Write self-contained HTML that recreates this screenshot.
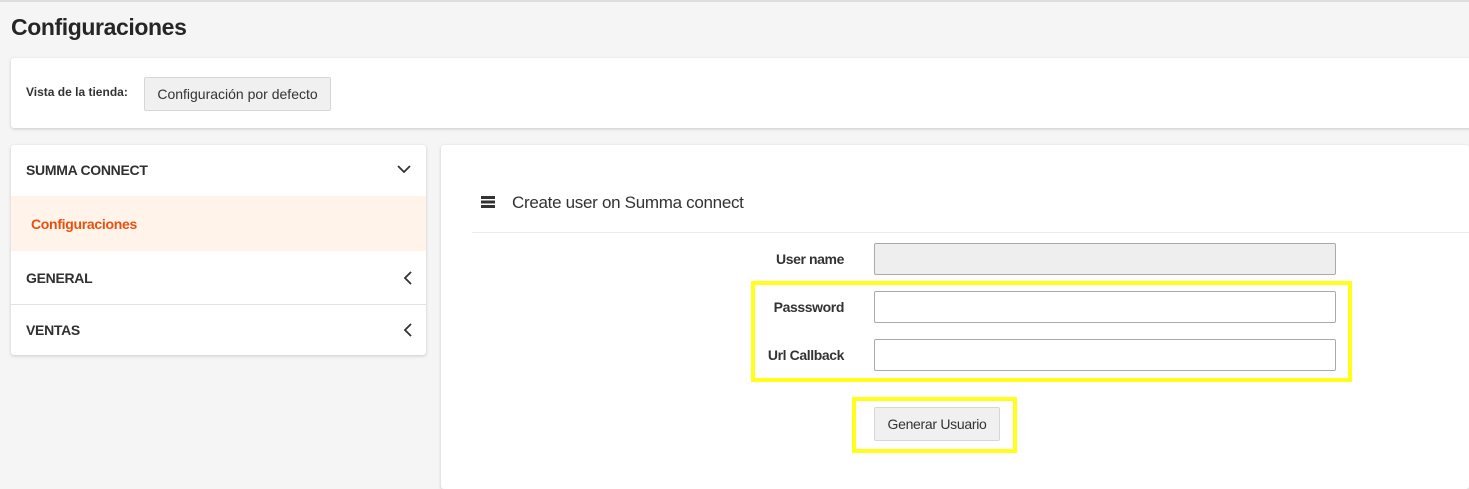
<!DOCTYPE html>
<html><head><meta charset="utf-8"><style>
*{box-sizing:border-box;margin:0;padding:0}
html,body{width:1469px;height:489px;overflow:hidden}
body{background:#f5f5f5;font-family:"Liberation Sans",sans-serif;color:#333;position:relative}
.a{position:absolute}
.card{background:#fff;box-shadow:0 1px 3px rgba(0,0,0,.18);border-radius:3px}
.nm{font-size:14px;font-weight:bold;color:#303030;letter-spacing:-.3px}
.inp{position:absolute;left:874px;width:462px;height:32px;border:1px solid #aaa;border-radius:2px;background:#fff}
.lbl{position:absolute;right:625px;font-size:14px;font-weight:bold;color:#333;letter-spacing:-.4px}
.y{position:absolute;border:4px solid #ffff1a}
</style></head><body>
<div class="a" style="left:0;top:0;width:1469px;height:2px;background:#ddd"></div>
<div class="a" style="left:11px;top:14px;font-size:23px;font-weight:bold;color:#262626;letter-spacing:-.4px">Configuraciones</div>
<div class="a card" style="left:11px;top:58px;width:1470px;height:70px"></div>
<div class="a" style="left:26px;top:85px;font-size:12px;font-weight:bold;color:#333">Vista de la tienda:</div>
<div class="a" style="left:144px;top:77px;width:187px;height:34px;background:#f0f0f0;border:1px solid #d6d6d6;border-radius:2px;font-size:14px;line-height:32px;text-align:center;color:#333">Configuración por defecto</div>

<div class="a card" style="left:11px;top:145px;width:415px;height:210px;overflow:hidden">
 <div class="a nm" style="left:15px;top:17px">SUMMA CONNECT</div>
 <svg class="a" style="left:386px;top:19px" width="14" height="10" viewBox="0 0 14 10"><path d="M1 2 L7 8 L13 2" fill="none" stroke="#333" stroke-width="1.8"/></svg>
 <div class="a" style="left:0;top:51px;width:415px;height:55px;background:#fff3ea"></div>
 <div class="a" style="left:20px;top:71px;font-size:14px;font-weight:bold;color:#e8500e;letter-spacing:-.3px">Configuraciones</div>
 <div class="a nm" style="left:15px;top:125px">GENERAL</div>
 <svg class="a" style="left:392px;top:126px" width="10" height="14" viewBox="0 0 10 14"><path d="M8 1 L2 7 L8 13" fill="none" stroke="#333" stroke-width="1.8"/></svg>
 <div class="a" style="left:0;top:159px;width:415px;height:1px;background:#e3e3e3"></div>
 <div class="a nm" style="left:15px;top:177px">VENTAS</div>
 <svg class="a" style="left:392px;top:178px" width="10" height="14" viewBox="0 0 10 14"><path d="M8 1 L2 7 L8 13" fill="none" stroke="#333" stroke-width="1.8"/></svg>
</div>

<div class="a card" style="left:441px;top:145px;width:1028px;height:344px"></div>
<div class="a" style="left:481px;top:196px;width:14px;height:2.5px;background:#333;box-shadow:0 4.5px 0 #333,0 9px 0 #333"></div>
<div class="a" style="left:512px;top:193px;font-size:17px;color:#333;letter-spacing:-.3px">Create user on Summa connect</div>
<div class="a" style="left:472px;top:232px;width:997px;height:1px;background:#ececec"></div>

<div class="lbl" style="top:251px">User name</div>
<div class="inp" style="top:243px;background:#eee"></div>
<div class="lbl" style="top:299px">Passsword</div>
<div class="inp" style="top:291px"></div>
<div class="lbl" style="top:347px">Url Callback</div>
<div class="inp" style="top:339px"></div>
<div class="y" style="left:751px;top:281px;width:601px;height:101px"></div>

<div class="a" style="left:874px;top:407px;width:126px;height:34px;background:#f0f0f0;border:1px solid #d6d6d6;border-radius:2px;font-size:14px;line-height:32px;text-align:center;color:#333;letter-spacing:-.3px">Generar Usuario</div>
<div class="y" style="left:852px;top:397px;width:165px;height:56px"></div>
</body></html>
